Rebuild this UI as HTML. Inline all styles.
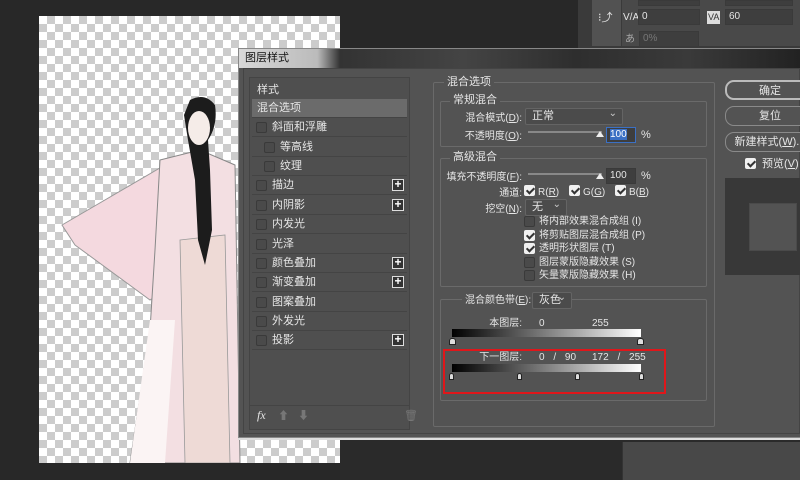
<!DOCTYPE html>
<html><head><meta charset="utf-8"><style>
*{margin:0;padding:0;box-sizing:border-box}
body{width:800px;height:480px;overflow:hidden;background:#282828;position:relative;font-family:"Liberation Sans","Noto Sans CJK SC",sans-serif;font-size:11px;line-height:13px;color:#e6e6e6}
.a{position:absolute;white-space:nowrap}
.r{position:absolute;white-space:nowrap;text-align:right;font-size:10px}
.chk{position:absolute;width:11px;height:11px;border:1px solid #3a3a3a;background:#4a4a4a;border-radius:2px}
.chk.on{background:#f0f0f0;border-color:#f0f0f0}
.chk.on:after{content:"";position:absolute;left:3px;top:0px;width:3px;height:6px;border:solid #333;border-width:0 2px 2px 0;transform:rotate(45deg)}
.row{position:absolute;left:252px;width:155px;height:19px;border-bottom:1px solid #444;line-height:18px;white-space:nowrap}
.plus{position:absolute;right:3px;top:3px;width:12px;height:12px;border:1px solid #ddd;background:#333;color:#fff;font-size:12px;line-height:9px;text-align:center;font-weight:bold}
.grp{position:absolute;border:1px solid #6a6a6a;border-radius:2px}
.lbl{position:absolute;background:#535353;padding:0 3px;white-space:nowrap}
.inp{position:absolute;background:#3e3e3e;border:1px solid #3a3a3a;height:16px;line-height:14px;padding-left:3px;font-size:10px}
.sel{position:absolute;background:#4b4b4b;border:1px solid #646464;height:17px;line-height:15px;padding-left:6px;border-radius:2px}
.sel:after{content:"⌄";position:absolute;right:5px;top:-3px;font-size:10px;color:#ccc}
.btn{position:absolute;left:725px;width:90px;height:20px;border:1px solid #8a8a8a;border-radius:9px;background:#535353;text-align:center;line-height:18px;white-space:nowrap}
.grad{position:absolute;height:8px;background:linear-gradient(90deg,#000,#fff)}
.tri{position:absolute;width:7px;height:7px;background:#ddd;border-radius:3px 3px 0 0;border:1px solid #222}
</style></head><body>
<div class="a" style="left:39px;top:16px;width:301px;height:447px;background-color:#fff;background-image:linear-gradient(45deg,#ccc 25%,transparent 25%,transparent 75%,#ccc 75%),linear-gradient(45deg,#ccc 25%,transparent 25%,transparent 75%,#ccc 75%);background-size:16px 16px;background-position:0 0,8px 8px"></div>
<svg class="a" style="left:0;top:0" width="340" height="463">
<path d="M165 165 L62 225 L75 245 L150 300 L165 290 Z" fill="#f4d9df" stroke="#999" stroke-width="1"/>
<path d="M160 160 L200 150 L235 165 L240 463 L130 463 L150 330 L155 250 Z" fill="#f3dfe2" stroke="#888" stroke-width="1"/>
<path d="M130 463 L150 320 L175 320 L165 463 Z" fill="#fbf4f4"/>
<path d="M180 240 L225 235 L230 463 L185 463 Z" fill="#eedad6" stroke="#999" stroke-width="0.8"/>
<path d="M190 100 Q205 92 215 105 Q218 125 208 140 L210 170 L212 230 L205 265 L198 240 L195 180 L188 140 L184 115 Z" fill="#1c1c1c"/>
<ellipse cx="199" cy="128" rx="11" ry="17" fill="#f5ece8"/>
</svg>
<div class="a" style="left:578px;top:0;width:222px;height:48px;background:#3a3a3a"></div>
<div class="a" style="left:592px;top:0;width:208px;height:46px;background:#494949"></div>
<div class="a" style="left:592px;top:0;width:30px;height:46px;background:#525252;border-right:1px solid #3a3a3a"></div>
<div class="a" style="left:598px;top:12px;font-size:11px">⁝⤴</div>
<div class="a" style="left:623px;top:11px;font-size:10px">V/A</div>
<div class="inp" style="left:638px;top:9px;width:62px">0</div>
<div class="a" style="left:707px;top:11px;font-size:9px;background:#ddd;color:#333;padding:0 1px">VA</div>
<div class="inp" style="left:725px;top:9px;width:68px">60</div>
<div class="inp" style="left:638px;top:0;width:62px;height:6px"></div>
<div class="inp" style="left:725px;top:0;width:68px;height:6px"></div>
<div class="a" style="left:625px;top:33px;font-size:10px;color:#aaa">あ</div>
<div class="inp" style="left:639px;top:31px;width:60px;color:#777">0%</div>
<div class="a" style="left:238px;top:48px;width:562px;height:390px;background:#545454;border:1px solid #888;border-right:none"></div>
<div class="a" style="left:239px;top:49px;width:561px;height:19px;background:linear-gradient(90deg,#d8d8d8 0%,#bbb 14%,#333 18%,#444 40%,#2e2e2e 60%,#3a3a3a 80%,#222 100%)"></div>
<div class="a" style="left:245px;top:52px;color:#111;font-size:11px">图层样式</div>
<div class="a" style="left:243px;top:68px;width:557px;height:366px;border:1px solid #444;background:#535353"></div>
<div class="a" style="left:249px;top:77px;width:161px;height:353px;background:#4f4f4f;border:1px solid #444"></div>
<div class="row" style="top:81px;padding-left:5px">样式</div>
<div class="row" style="top:99px;padding-left:5px;background:#6b6b6b">混合选项</div>
<div class="row" style="top:118px;padding-left:20px"><span class="chk" style="left:4px;top:4px"></span>斜面和浮雕</div>
<div class="row" style="top:138px;padding-left:28px"><span class="chk" style="left:12px;top:4px"></span>等高线</div>
<div class="row" style="top:157px;padding-left:28px"><span class="chk" style="left:12px;top:4px"></span>纹理</div>
<div class="row" style="top:176px;padding-left:20px"><span class="chk" style="left:4px;top:4px"></span>描边<span class="plus">+</span></div>
<div class="row" style="top:196px;padding-left:20px"><span class="chk" style="left:4px;top:4px"></span>内阴影<span class="plus">+</span></div>
<div class="row" style="top:215px;padding-left:20px"><span class="chk" style="left:4px;top:4px"></span>内发光</div>
<div class="row" style="top:235px;padding-left:20px"><span class="chk" style="left:4px;top:4px"></span>光泽</div>
<div class="row" style="top:254px;padding-left:20px"><span class="chk" style="left:4px;top:4px"></span>颜色叠加<span class="plus">+</span></div>
<div class="row" style="top:273px;padding-left:20px"><span class="chk" style="left:4px;top:4px"></span>渐变叠加<span class="plus">+</span></div>
<div class="row" style="top:293px;padding-left:20px"><span class="chk" style="left:4px;top:4px"></span>图案叠加</div>
<div class="row" style="top:312px;padding-left:20px"><span class="chk" style="left:4px;top:4px"></span>外发光</div>
<div class="row" style="top:331px;padding-left:20px"><span class="chk" style="left:4px;top:4px"></span>投影<span class="plus">+</span></div>
<div class="a" style="left:250px;top:405px;width:159px;height:1px;background:#444"></div>
<div class="a" style="left:257px;top:409px;font-style:italic;font-family:'Liberation Serif',serif;font-size:12px">fx</div>
<div class="a" style="left:278px;top:410px;color:#777">⬆</div>
<div class="a" style="left:298px;top:410px;color:#777">⬇</div>
<div class="a" style="left:404px;top:410px;color:#777">🗑</div>
<div class="grp" style="left:433px;top:82px;width:282px;height:345px"></div>
<div class="lbl" style="left:444px;top:76px">混合选项</div>
<div class="grp" style="left:440px;top:101px;width:267px;height:46px"></div>
<div class="lbl" style="left:450px;top:94px">常规混合</div>
<div class="r" style="left:440px;width:82px;top:112px">混合模式(<u>D</u>):</div>
<div class="sel" style="left:525px;top:108px;width:98px">正常</div>
<div class="r" style="left:440px;width:82px;top:130px">不透明度(<u>O</u>):</div>
<div class="a" style="left:528px;top:131px;width:74px;height:2px;background:#888"></div>
<div class="a" style="left:596px;top:127px;width:0;height:0;border:4px solid transparent;border-bottom:6px solid #eee"></div>
<div class="inp" style="left:606px;top:127px;width:30px;border-color:#3b70c4"><span style="background:#3b70c4;color:#fff">100</span></div>
<div class="a" style="left:641px;top:129px">%</div>
<div class="grp" style="left:440px;top:158px;width:267px;height:129px"></div>
<div class="lbl" style="left:450px;top:151px">高级混合</div>
<div class="r" style="left:440px;width:82px;top:171px">填充不透明度(<u>F</u>):</div>
<div class="a" style="left:528px;top:173px;width:74px;height:2px;background:#888"></div>
<div class="a" style="left:596px;top:169px;width:0;height:0;border:4px solid transparent;border-bottom:6px solid #eee"></div>
<div class="inp" style="left:606px;top:168px;width:30px">100</div>
<div class="a" style="left:641px;top:170px">%</div>
<div class="r" style="left:440px;width:82px;top:187px">通道:</div>
<span class="chk on" style="left:524px;top:185px"></span><div class="a" style="left:538px;top:186px;font-size:10px">R(<u>R</u>)</div>
<span class="chk on" style="left:569px;top:185px"></span><div class="a" style="left:583px;top:186px;font-size:10px">G(<u>G</u>)</div>
<span class="chk on" style="left:615px;top:185px"></span><div class="a" style="left:629px;top:186px;font-size:10px">B(<u>B</u>)</div>
<div class="r" style="left:440px;width:82px;top:203px">挖空(<u>N</u>):</div>
<div class="sel" style="left:525px;top:199px;width:42px">无</div>
<span class="chk" style="left:524px;top:216px"></span><div class="a" style="left:539px;top:215px;font-size:10px">将内部效果混合成组 (I)</div>
<span class="chk on" style="left:524px;top:230px"></span><div class="a" style="left:539px;top:229px;font-size:10px">将剪贴图层混合成组 (P)</div>
<span class="chk on" style="left:524px;top:243px"></span><div class="a" style="left:539px;top:242px;font-size:10px">透明形状图层 (T)</div>
<span class="chk" style="left:524px;top:257px"></span><div class="a" style="left:539px;top:256px;font-size:10px">图层蒙版隐藏效果 (S)</div>
<span class="chk" style="left:524px;top:270px"></span><div class="a" style="left:539px;top:269px;font-size:10px">矢量蒙版隐藏效果 (H)</div>
<div class="grp" style="left:440px;top:299px;width:267px;height:102px"></div>
<div class="lbl" style="left:462px;top:294px;padding-right:4px;font-size:10px">混合颜色带(<u>E</u>):</div>
<div class="sel" style="left:532px;top:292px;width:40px">灰色</div>
<div class="r" style="left:450px;width:72px;top:317px">本图层:</div>
<div class="a" style="left:539px;top:317px;font-size:10px">0</div>
<div class="a" style="left:592px;top:317px;font-size:10px">255</div>
<div class="grad" style="left:452px;top:329px;width:189px"></div>
<div class="tri" style="left:449px;top:338px"></div>
<div class="tri" style="left:637px;top:338px"></div>
<div class="r" style="left:450px;width:72px;top:351px">下一图层:</div>
<div class="a" style="left:539px;top:351px;font-size:10px;word-spacing:6px">0 / 90</div>
<div class="a" style="left:592px;top:351px;font-size:10px;word-spacing:6px">172 / 255</div>
<div class="grad" style="left:452px;top:364px;width:189px"></div>
<div class="tri" style="left:449px;top:373px;width:5px"></div>
<div class="tri" style="left:517px;top:373px;width:5px"></div>
<div class="tri" style="left:575px;top:373px;width:5px"></div>
<div class="tri" style="left:639px;top:373px;width:5px"></div>
<div class="a" style="left:443px;top:349px;width:223px;height:45px;border:2px solid #e0161a"></div>
<div class="btn" style="top:80px;border-color:#bbb;border-width:2px">确定</div>
<div class="btn" style="top:106px">复位</div>
<div class="btn" style="top:132px">新建样式(<u>W</u>)...</div>
<span class="chk on" style="left:745px;top:158px"></span><div class="a" style="left:762px;top:158px">预览(<u>V</u>)</div>
<div class="a" style="left:725px;top:178px;width:75px;height:97px;background:#383838"></div>
<div class="a" style="left:749px;top:203px;width:48px;height:48px;background:#535353;border:1px solid #4a4a4a"></div>
<div class="a" style="left:238px;top:438px;width:562px;height:2px;background:#ddd"></div>
<div class="a" style="left:340px;top:440px;width:460px;height:40px;background:#2a2a2a"></div>
<div class="a" style="left:622px;top:442px;width:178px;height:38px;background:#484848;border-left:1px solid #333"></div>
</body></html>
